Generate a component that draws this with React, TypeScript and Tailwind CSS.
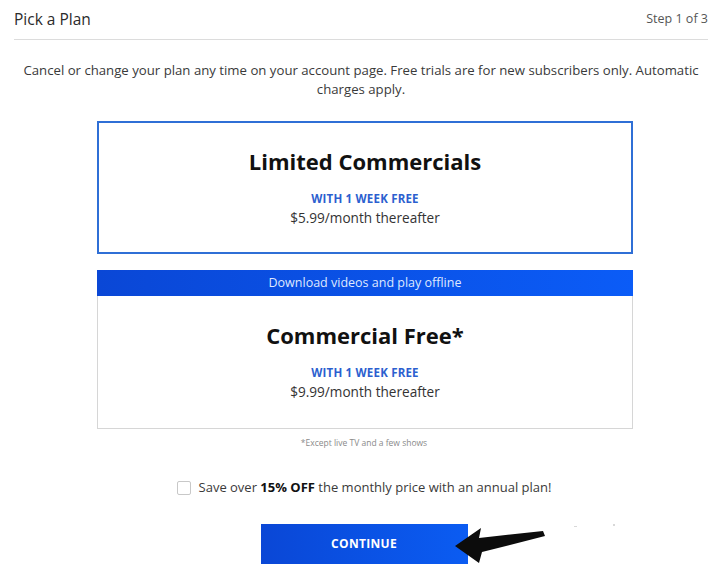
import React from 'react';

const plans = [
  { title: 'Limited Commercials', price: '$5.99/month thereafter', selected: true },
  { title: 'Commercial Free*', price: '$9.99/month thereafter', banner: 'Download videos and play offline' },
];

const App = () => {
  return (
    <div className="relative w-[722px] h-[585px] bg-white text-[#333] font-['Open_Sans',sans-serif] overflow-hidden">
      <div className="mx-[14px] flex items-center justify-between h-[40px] border-b border-[#dcdcdc]">
        <h1 className="text-[15.5px] text-[#2b2b2b] pt-px">Pick a Plan</h1>
        <span className="text-[12.5px] text-[#555]">Step 1 of 3</span>
      </div>

      <p className="mt-[21px] px-[14px] text-center text-[13.2px] leading-[19px] text-[#3a3a3a]">
        Cancel or change your plan any time on your account page. Free trials are for new subscribers only. Automatic charges apply.
      </p>

      <div className="ml-[97px] mt-[22px] w-[536px] flex flex-col gap-[16px]">
        {plans.map((plan, i) => (
          <div key={i} className="flex flex-col">
            {plan.banner && (
              <div className="h-[26px] flex items-center justify-center bg-gradient-to-r from-[#0a47d6] to-[#0b5cf7] text-[12.5px] text-[#dfe8ff]">
                {plan.banner}
              </div>
            )}
            <div
              className={
                plan.selected
                  ? 'h-[133px] border-2 border-[#2f6fd6] flex flex-col items-center pt-[23px]'
                  : 'h-[133px] border border-t-0 border-[#d6d6d6] flex flex-col items-center pt-[24px]'
              }
            >
              <h2 className="text-[22px] font-bold text-[#111] leading-[30px]">{plan.title}</h2>
              <div className="mt-[14px] text-[11.5px] font-bold tracking-[0.2px] text-[#2c5fcf]">WITH 1 WEEK FREE</div>
              <div className="mt-[1px] text-[13.6px] text-[#333]">{plan.price}</div>
            </div>
          </div>
        ))}
      </div>

      <p className="mt-[8px] ml-[6px] text-center text-[8.5px] text-[#8a8a8a]">*Except live TV and a few shows</p>

      <label className="mt-[28px] ml-[6px] flex items-center justify-center gap-[8px] text-[13px] text-[#3a3a3a]">
        <span className="w-[14px] h-[14px] border border-[#c8c8c8] rounded-[2px] bg-white" />
        <span>
          Save over <b className="text-[#111]">15% OFF</b> the monthly price with an annual plan!
        </span>
      </label>

      <div className="mt-[27px] flex justify-center">
        <button className="ml-[6px] w-[207px] h-[40px] bg-gradient-to-r from-[#0a47d6] to-[#0b5cf2] text-white text-[12px] font-bold tracking-[0.3px]">
          CONTINUE
        </button>
      </div>

      <svg className="absolute left-[450px] top-[522px]" width="100" height="45" viewBox="0 0 100 45">
        <polygon points="5,24 31,6 29,16 93,9 95,14 32,30 29,41" fill="#0c0c0c" />
      </svg>
      <span className="absolute left-[574px] top-[526px] w-[3px] h-[1px] bg-[#d8d8d8]" />
      <span className="absolute left-[613px] top-[524px] w-[2px] h-[2px] bg-[#d8d8d8]" />
    </div>
  );
};

export default App;
